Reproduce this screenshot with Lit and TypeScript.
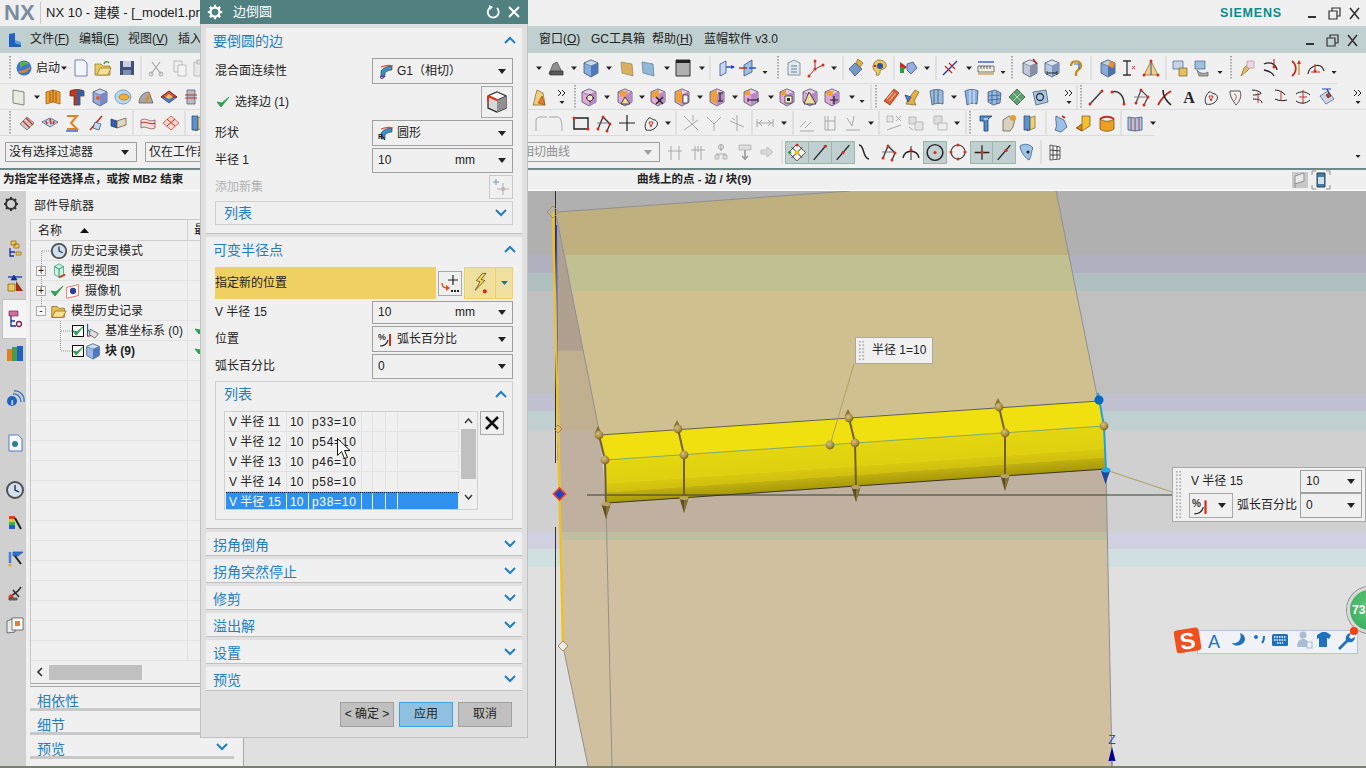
import { LitElement, html, css, svg } from "lit";
import { customElement } from "lit/decorators.js";

const st = (d: string, c = "#333", w = 1.1) => svg`<path d=${d} fill="none" stroke=${c} stroke-width=${w}/>`;
const pg = (d: string, f: string, s = "#456") => svg`<path d=${d} fill=${f} stroke=${s} stroke-width=".7"/>`;
const dots = (pts: number[][], c = "#d03020") => pts.map(([x, y]) => svg`<circle cx=${x} cy=${y} r="1.5" fill=${c}/>`);
const cube = (t: string, l: string, r: string) => svg`<path d="M10 2l7 3v10l-7 4-7-4V5z" fill=${l} stroke="#456" stroke-width=".8"/><path d="M3 5l7 3 7-3-7-3z" fill=${t} stroke="#456" stroke-width=".5"/><path d="M10 8v11l7-4V5z" fill=${r}/>`;
const pink = (extra: any) => svg`${cube("#f0c8e8", "#e4a8d8", "#b888c8")}${extra}`;
const gr = "#a8a8a8";

const ICONS: Record<string, any> = {
  arrow: svg`<path d="M7 8.5h6l-3 3.5z" fill="#222"/>`,
  sarrow: svg`<path d="M7.5 13h5l-2.5 3z" fill="#222"/>`,
  sep: svg`<path d="M10 -2v24" stroke="#d0d0d0"/>`,
  grip: svg`<path d="M10 -2v24" stroke="#909090" stroke-width="1.5" stroke-dasharray="1.5 1.5"/>`,
  more: svg`<path d="M6 3l3 3-3 3M10 3l3 3-3 3" fill="none" stroke="#222"/><path d="M7.5 14h5l-2.5 3z" fill="#222"/>`,
  start: svg`<circle cx="10" cy="10" r="7.5" fill="#3a78d0"/><path d="M3 13c5 4 12 2 14-6-2 4-9 6-14 6z" fill="#e88020"/><path d="M6 5c3-2 7-2 9 1-3 0-6 1-9 4z" fill="#60b040"/>`,
  page: svg`<path d="M4 2h9l3 3v13H4z" fill="#f4f6ff" stroke="#7080c0"/>`,
  open: svg`<path d="M2 6h6l2 2h7v9H2z" fill="#e8c860" stroke="#907020" stroke-width=".7"/><path d="M4 17l3-7h11l-3 7z" fill="#f4e090" stroke="#907020" stroke-width=".7"/><path d="M11 6c1-3 4-3 5-1" fill="none" stroke="#409040" stroke-width="1.4"/>`,
  save: svg`<path d="M3 3h14v14H3z" fill="#405080"/><path d="M6 3h8v6H6z" fill="#c8d0e0"/><path d="M6 12h8v5H6z" fill="#808ca8"/>`,
  scissors: svg`${st("M5 16l9-12M15 16L6 4", gr, 1.2)}<circle cx="5" cy="16" r="2" fill="none" stroke=${gr}/><circle cx="15" cy="16" r="2" fill="none" stroke=${gr}/>`,
  copy: svg`${pg("M4 3h8v11H4z", "#eee", gr)}${pg("M8 7h8v11H8z", "#f4f4f4", gr)}`,
  paste: svg`${pg("M4 4h12v14H4z", "#e8e8e8", gr)}${pg("M7 2h6v4H7z", "#ddd", gr)}`,
  sq: pg("M4 3l11 2v13L4 16z", "#e8ece0", "#506050"),
  bookO: svg`${pg("M3 5l7-2 7 2v12l-7-2-7 2z", "#f0a030", "#905010")}${st("M7 5v10M10 3v12M13 5v10", "#905010", 1)}`,
  tee: svg`${pg("M3 4c4-2 10-2 14 0v5h-4v9H7V9H3z", "#c03820", "#602010")}<path d="M10 3c2 0 5 0 7 1v5h-4v9h-3z" fill="#3060a0"/>`,
  cubeB: cube("#c8dcf4", "#88aee0", "#5078b8"),
  cubeBo: svg`${cube("#c8d4f0", "#98a8e0", "#7888c8")}<circle cx="8" cy="11" r="2" fill="#e06020"/>`,
  oval: svg`<path d="M10 3c5 0 8 4 8 7s-3 7-8 7-8-4-8-7 3-7 8-7z" fill="#b8d8f0" stroke="#5080b0" stroke-width=".7"/><ellipse cx="11" cy="10" rx="5" ry="3" fill="#f0b030" stroke="#a06010" stroke-width=".6"/>`,
  scan: svg`${pg("M3 16l4-10 4-2 4 8 2 4z", "#909090", "#444")}${pg("M4 13h13v4H4z", "#585858", "#333")}`,
  scanO: svg`${pg("M3 16c0-7 5-11 10-11l4 11z", "#a8a8a8", "#505050")}<path d="M9 14l4-8 2 1-4 8z" fill="#e09020"/>`,
  rb: svg`${pg("M10 4l8 6-8 6-8-6z", "#5078c0", "#304070")}${pg("M10 4l8 6H2z", "#d05040", "#802010")}<path d="M10 7l4 3-4 2-4-2z" fill="#f0c060"/>`,
  cyl: svg`${pg("M6 3h8v14H6z", "#b8b8c8", "#505060")}${st("M4 8h12M4 11h12", "#c03020", 1)}`,
  l3a: svg`${pg("M3 11l7-7 7 6-7 7z", "#c8c8c8", "#606060")}${st("M6 8l7 7M9 5l7 7", "#d03020", 1.3)}`,
  l3b: svg`${pg("M2 9l8-4 8 4-8 5z", "#c0d0e8", "#304870")}${st("M6 8l1 3M10 6l1 5M14 8l-1 3", "#d03020", 1.6)}`,
  l3c: svg`${st("M5 3h10L9 10l6 6H5", "#e08020", 2)}${st("M4 18h12", "#3060c0", 1.4)}`,
  l3d: svg`${st("M4 17L16 3", "#c03020", 1.6)}${pg("M9 9l6 2-2 6-6-2z", "#c0d8f0", "#304870")}`,
  l3e: svg`${pg("M2 6l6 2v7L2 13z", "#3060a8", "#203870")}${pg("M8 8l9-3v7l-9 3z", "#e0d8c0", "#605030")}`,
  l3f: svg`${pg("M3 7c5-3 9 3 14 0v8c-5 3-9-3-14 0z", "#f0e0e0", "#804040")}${st("M3 10c5-3 9 3 14 0", "#d03020", 1.2)}`,
  l3g: svg`${pg("M10 3l8 7-8 7-8-7z", "#f4d8d0", "#c03020")}${st("M6 6l8 7M14 6l-8 7", "#c03020", 1)}`,
  faceY: pg("M4 4l11 2 1 12-11-3z", "#d8b060", "#908060"),
  faceB: pg("M4 4l11 2 1 12-11-3z", "#90b8d8", "#607890"),
  box: svg`<path d="M3 2h14v16H3z" fill="#b0b0b0" stroke="#333" stroke-width="1"/><path d="M3 2h14v3H3z" fill="#222"/>`,
  planeA: svg`${pg("M4 6l6-3v12l-6 3z", "#c8d8f0", "#204080")}${st("M10 9h8", "#2040d0", 1.4)}<path d="M15 7l4 2-4 2z" fill="#2040d0"/>`,
  planeB: svg`${pg("M6 7l8-5v12l-8 4z", "#9cc0e0", "#204080")}${st("M1 10h8", "#c02020", 1.4)}${st("M11 10h7", "#2040d0", 1.4)}`,
  listCube: svg`${pg("M4 5l6-3 6 3v12H4z", "#e0e8f0", "#607080")}${st("M7 8h6M7 11h6M7 14h6", "#608090", 1.2)}`,
  axes: svg`${st("M10 3v8l-6 7M10 11l8-4", "#a03030", 1)}${dots([[10, 3], [18, 7], [4, 18], [10, 11]])}`,
  diamond: svg`${pg("M9 5l7 6-7 7-6-7z", "#7898c8", "#304070")}${pg("M12 1l5 4-3 4-4-4z", "#e0b040", "#806020")}`,
  palette: svg`<path d="M10 2c5 0 8 3 7 7-2 3-6 2-6 5s-2 4-4 3c2-4-3-3-3-8 0-4 3-7 6-7z" fill="#e8c860" stroke="#806020" stroke-width=".7"/><circle cx="11" cy="8" r="3" fill="#3050a0"/><circle cx="6" cy="8" r="1.3" fill="#c03020"/>`,
  triGreen: svg`<path d="M2 4l7 5-7 6z" fill="#c03020"/><path d="M2 9h4v6H2z" fill="#20a040"/>${pg("M9 6l6-2 4 6-6 6-4-4z", "#90b0e0", "#304880")}`,
  measLine: svg`${st("M3 17L17 3", "#3040a0", 1.4)}${st("M5 8l7 7M9 5l6 6", "#c02020", 1.1)}`,
  ruler: svg`${pg("M2 8h16v6H2z", "#f0f0e0", "#404040")}${st("M5 8v3M8 8v3M11 8v3M14 8v3", "#333", .8)}${st("M2 4h16", "#2040c0", 1.2)}${st("M2 16h16", "#d09020", 1.2)}`,
  cubePen: svg`${cube("#e0e4ec", "#c0c8d8", "#8890a8")}${st("M13 1l4 5", "#c02020", 1.5)}`,
  cubeDim: svg`${cube("#dde4f0", "#b8c8e0", "#8098c0")}${st("M5 15h10", "#222", 1)}${st("M5 13v4M15 13v4", "#222", .8)}`,
  keyY: svg`<path d="M5 8c0-6 9-6 10-1 1 4-5 5-5 8v3" fill="none" stroke="#c09020" stroke-width="2.4"/><path d="M8 6l5 0v5" fill="none" stroke="#3070b0" stroke-width="1.2"/>`,
  boxOrange: svg`${cube("#c0d0e8", "#88a8d8", "#5070a8")}<path d="M12 3l5 2-2 5-5-2z" fill="#e89030"/>`,
  dimX: svg`${st("M6 3h8M10 3v14M6 17h8", "#333", 1.3)}${st("M15 8l3 3M18 8l-3 3", "#d03030", .9)}`,
  conePts: svg`${pg("M10 3l7 14H3z", "#f0d090", "#806020")}${st("M10 3v14", "#305090", 1)}${dots([[10, 3], [3, 17], [17, 17]])}`,
  lockA: svg`${pg("M3 3h10v8H3z", "#c8d4e8", "#406090")}${pg("M9 10h8v8H9z", "#e0c060", "#806020")}`,
  lockB: svg`${pg("M3 3h10v8H3z", "#9cc0dc", "#406090")}${pg("M5 12c3 4 8 4 11 2v4H7z", "#a8a8a8", "#606060")}`,
  penY: svg`${pg("M4 18l3-8 8-7 2 2-7 8z", "#e8c060", "#806020")}${pg("M10 3h7v7h-7z", "#f0d8e8", "#b090a0")}`,
  curveCut: svg`${st("M3 6c6-3 12 0 13 6", "#222", 1.3)}${st("M3 12c5 1 9 3 10 6", "#222", 1.3)}${st("M13 1v8", "#c02020", 1.1)}${dots([[13, 9]])}`,
  curveRed: svg`${st("M7 18c5-4 5-11 0-15", "#c03020", 1.8)}${st("M14 3v14", "#d08020", 1.2)}<path d="M12 6l2-4 2 4z" fill="#d03020"/>`,
  arcRed: svg`${st("M2 16c1-8 13-13 16-3", "#333", 1.2)}${st("M9 6v7M5 14h9", "#c03020", 1)}${dots([[9, 13]])}`,
  faceYO: svg`${pg("M5 18c2-5 2-9 4-15l6 3 2 12z", "#f0d080", "#806020")}${pg("M10 16l4-7 3 9z", "#e08030", "#a05010")}`,
  p1: pink(svg`${st("M7 11h8M11 7v8", "#222", 1.3)}<circle cx="11" cy="11" r="3" fill="#f0f0d0" stroke="#222" stroke-width=".7"/>`),
  p2: pink(svg`<path d="M5 4h8l-3 7-5-2z" fill="#f0a030"/><path d="M10 10l5 7H6z" fill="#f0e0a0" stroke="#222" stroke-width=".8"/>`),
  p3: pink(svg`<path d="M4 5l7-2v7H4z" fill="#f0a030"/>${st("M8 10l7 7M15 10l-7 7", "#222", 1.4)}`),
  p4: pink(svg`<path d="M4 5l6-2v14l-6-3z" fill="#f0a030"/>${pg("M11 8h5v8h-5z", "#f4f4f4", "#222")}`),
  p5: pink(svg`<path d="M4 5l6-2v14l-6-3z" fill="#f0a030"/>${st("M11 6h5M11 14h5M13 6v8", "#222", 1.1)}`),
  p6: pink(svg`<path d="M4 5l5-2v5H4z" fill="#f0a030"/>${st("M7 13h10", "#222", 1.1)}${st("M7 11v4M17 11v4", "#222", 1)}`),
  p7: pink(svg`<path d="M4 5l5-2v5H4z" fill="#f0a030"/>${pg("M8 9h7v7H8z", "#f4f0d0", "#222")}<path d="M10 11h3v3h-3z" fill="#222"/>`),
  p8: pink(svg`<path d="M9 5l7 12H4z" fill="#f0e0a0" stroke="#222" stroke-width=".8"/>`),
  p9: pink(svg`<path d="M5 4h7l-3 5-4-1z" fill="#f0a030"/>${st("M8 13h8M12 9v8", "#222", 1.2)}`),
  barR: svg`${pg("M3 14L13 2l5 4-9 12z", "#e06030", "#803010")}${st("M6 12l6-7M8 14l7-8", "#fff", .8)}`,
  spark: svg`${pg("M4 17l3-6 6-8 4 2-5 9 2 4z", "#e8b040", "#806020")}${pg("M3 8l6 2-3 5z", "#5080d0", "#203070")}`,
  surf: svg`<path d="M4 4c4-2 10-2 13 0v13c-3-1-8-1-11 1z" fill="#9cbcdc" stroke="#304870" stroke-width=".7"/>${st("M8 3v14M12 3v14", "#304870", .7)}`,
  surf2: svg`<path d="M4 4c4-2 10-2 13 0l-1 13c-3-1-7-1-10 1z" fill="#88b0dc" stroke="#304870" stroke-width=".7"/>${st("M9 3v14M13 3v14", "#fff", .8)}`,
  gridB: svg`${pg("M4 5l7-2 6 3-1 10-7 2-5-3z", "#90b8e0", "#304870")}${st("M8 4v13M13 4v13M4 9l13-1M4 13l13-1", "#304870", .6)}`,
  gridG: svg`${pg("M10 2l8 8-8 8-8-8z", "#60a070", "#205030")}${st("M6 6l8 8M14 6l-8 8", "#d0e8d0", .8)}`,
  gridO: svg`${pg("M3 5l13-2 2 12-12 3z", "#a8c8e8", "#304870")}<circle cx="10" cy="10" r="3.5" fill="none" stroke="#333" stroke-width="1.3"/>`,
  line: svg`${st("M4 17L16 4", "#333", 1.3)}${dots([[4, 17], [16, 4]])}`,
  arcPts: svg`${st("M3 5c7-2 12 4 12 12", "#333", 1.5)}${dots([[3, 5], [15, 17]])}`,
  poly: svg`${st("M4 16L9 3l7 7-4 8", "#444", 1.2)}${st("M2 10h14", "#777", .9)}${dots([[9, 3], [4, 16], [16, 10], [12, 18]])}`,
  xcurve: svg`${st("M3 18c3-6 6-10 13-14", "#c02820", 1.8)}${st("M8 3c0 6 2 10 8 15", "#222", 1.6)}`,
  A: svg`<text x="10" y="16" text-anchor="middle" font-family="Liberation Serif" font-weight="700" font-size="16" fill="#222">A</text>`,
  poc: svg`${st("M5 17c-2-5 0-9 3-12 2-1 3 2 6 2 3 1 3 5 1 7-2 3-7 4-10 3z", "#333", 1)}${st("M8 9h4l-2 5z", "#c03020", 1)}`,
  poc2: svg`${st("M5 4h10c2 5 0 10-4 14C8 14 5 10 5 4z", "#555", 1)}${st("M9 7c3 0 3 5 0 7", "#c06050", 1)}`,
  dash1: svg`${st("M4 3c5 0 8 2 9 3s-4 2-8 2M5 12c5 0 9 1 9 4", "#222", 1)}${st("M10 6v10", "#c03030", 1)}`,
  dash2: svg`${st("M4 3c4 0 8 2 10 5M4 12c4 2 8 2 12 1", "#222", 1)}${st("M10 4v10", "#c03030", 1)}`,
  dash3: svg`${st("M3 7c4-3 10-3 14 1M3 14c4 3 10 3 14-1", "#222", 1)}${st("M10 3v14M6 10h8", "#c03030", 1)}`,
  cardR: svg`${pg("M3 9l8-5 6 8-8 5z", "#d0d8e8", "#405880")}${pg("M9 8l3-2 2 3-3 2z", "#c04030", "#602010")}${st("M5 2h9M10 2l2 4", "#2040c0", 1.2)}`,
  garc: st("M6 18V8c0-3 2-4 5-4h6", gr, 1),
  garc2: st("M3 4h8c4 0 5 4 5 14", gr, 1),
  rect: svg`<path d="M3 5h14v11H3z" fill="none" stroke="#222" stroke-width="1.4"/>${dots([[3, 5], [17, 16]])}`,
  polyR: svg`${st("M4 16L9 4l7 7-3 7", "#333", 1.3)}${st("M3 10h12", "#666", .9)}${dots([[9, 4], [4, 16], [16, 11], [13, 18]])}`,
  cross: st("M10 2v16M2 10h16", "#222", 1.2),
  gtrim: st("M3 3l14 14M3 17L17 7M12 2v6", gr, 1),
  gtrim2: st("M3 4l7 7 7-7M10 11v7", gr, 1),
  gtrim3: st("M10 2v16M3 8l14 6M5 5l3 2", gr, 1),
  gdim: st("M2 10h16M2 6v8M18 6v8M7 7l-3 3 3 3M13 7l3 3-3 3", gr, 1),
  gslash: st("M3 14l6-6M8 15l6-6M3 18h14", gr, 1),
  gframe: st("M5 3v14h10V3M5 8h10M8 3v14", gr, 1),
  gang: st("M3 17h14M4 5l5 8M11 3l-2 10", gr, 1),
  gmix: svg`${pg("M3 3h6v6H3z", "#e8e8e8", gr)}${st("M12 3l5 5M17 3l-5 5M3 17l14-5", gr, 1)}`,
  gmix2: svg`${pg("M3 4h7v7H3z", "#ddd", gr)}${pg("M9 9h8v8H9z", "#e4e4e4", gr)}${st("M3 14l4 3", gr, 1)}`,
  gmix3: svg`${pg("M4 3h8v8H4z", "#ddd", gr)}${pg("M8 10h9v7H8z", "#eee", gr)}`,
  fBlue: svg`${pg("M4 3h12l-4 3v12H8V8H4z", "#5090d0", "#102850")}${st("M8 6h4", "#fff", 1)}`,
  fHand: svg`${pg("M4 18V7l6-4 6 3-2 8-3 4z", "#d8d0c0", "#505040")}<circle cx="14" cy="5" r="3" fill="#e0a030"/>`,
  fCyl: svg`${pg("M6 6l8-3v12l-8 3z", "#f0d070", "#806020")}${pg("M3 3h6v14H3z", "#6090c8", "#204070")}`,
  fSheet: svg`${pg("M5 17c3-5 0-8 1-14l8 4 3 7-6 5z", "#9cc0e8", "#304870")}${st("M12 3l3 2", "#c03020", 2)}`,
  fOrange: svg`${pg("M8 3h8v10l-8 5-6-3 6-4z", "#f0c030", "#805010")}${pg("M3 15l5-4v7z", "#e08020", "#805010")}`,
  fRed: svg`${pg("M3 6c4 3 10 3 14 0v10c-4 3-10 3-14 0z", "#f0a020", "#604010")}${st("M3 6c4-3 10-3 14 0", "#c03020", 1.8)}`,
  fBook: svg`${pg("M3 4l7 1 7-1v13l-7 1-7-1z", "#a8c8e8", "#204878")}${st("M10 5v13M6 5v12M14 5v12", "#c03020", .9)}`,
  gtick: st("M6 4v14M14 4v14M3 9h14", gr, 1),
  gtick2: st("M7 4v14M13 4v14M3 8h14M10 4v6", gr, 1),
  gchain: svg`${st("M10 3v6M6 17v-5h8v5", gr, 1.2)}<circle cx="10" cy="5" r="2.5" fill="none" stroke=${gr}/>${pg("M4 13h4v4H4zM12 13h4v4h-4z", "#ddd", gr)}`,
  gkey: svg`${pg("M4 3h12v5H4z", "#ddd", gr)}${st("M10 8v10M7 14l3 3 3-3", "#999", 1.6)}`,
  garrow: svg`<path d="M4 8h6V5l6 5-6 5v-3H4z" fill="#d8d8d8" stroke="#c0c0c0"/>`,
  snapAll: svg`${pg("M10 2l8 8-8 8-8-8z", "#f8f8f0", "#222")}${st("M5 5l10 10M15 5L5 15", "#222", .9)}<circle cx="10" cy="10" r="2" fill="#f0c000"/><circle cx="3" cy="10" r="1.4" fill="#20a020"/><circle cx="10" cy="3" r="1.4" fill="#d03020"/>`,
  snapEnd: svg`${st("M4 17L16 3", "#222", 1.3)}${dots([[15, 4]])}`,
  snapMid: svg`${st("M4 17L16 3", "#222", 1.3)}${dots([[10, 10]])}`,
  curveS: st("M5 3c6 0 3 13 10 14", "#222", 1.5),
  arcT: svg`${st("M2 16c2-9 14-9 16 0", "#222", 1.3)}${st("M10 4v14", "#333", 1)}${dots([[10, 8]])}`,
  circC: svg`<circle cx="10" cy="10" r="7.5" fill="none" stroke="#222" stroke-width="1.4"/>${dots([[10, 10]])}`,
  circQ: svg`<circle cx="10" cy="10" r="7" fill="none" stroke="#444" stroke-width="1.2"/>${dots([[10, 3], [17, 10], [10, 17], [3, 10]])}`,
  plus: svg`${st("M10 3v14M3 10h14", "#222", 1.2)}${dots([[10, 10]])}`,
  onLine: svg`${st("M4 17L16 3", "#222", 1.3)}${dots([[12, 8]])}`,
  faceP: svg`${pg("M4 4c4-3 10-2 13 2-2 3-1 8-4 12-3-2-8-6-9-14z", "#9cc4e8", "#304870")}${dots([[12, 10]], "#222")}`,
  gridL: svg`${pg("M5 3l10 2v12L5 18z", "#f4f4f4", "#222")}${st("M8 4v13M12 4v13M5 8l10 1M5 13l10 0", "#222", .8)}`,
  gear: svg`<circle cx="10" cy="10" r="5" fill="none" stroke="#333" stroke-width="2"/><path d="M10 3v2.500M10 14.500v2.500M3 10h2.500M14.500 10h2.500M5 5l2 2M13 13l2 2M15 5l-2 2M7 13l-2 2" stroke="#333" stroke-width="2"/>`,
  rAsm: svg`${pg("M6 3h5v4H6zM9 6h5v4H9z", "#f0c850", "#906010")}${st("M5 10v8h4M5 14h5", "#1030a0", 1.3)}${pg("M11 14h5v3h-5z", "#f0c850", "#906010")}`,
  rCon: svg`${st("M3 4l14 0", "#1030a0", 1.2)}${pg("M9 2l-3 5h6z", "#1030a0", "#1030a0")}${pg("M3 11h7v7H3z", "#f0c850", "#806010")}<path d="M11 8l7 10h-7z" fill="#a03010"/>`,
  rHist: svg`${pg("M4 3h9v5H4z", "#d070a0", "#802050")}${st("M6 8v10h5M6 13h4", "#1030a0", 1.3)}<circle cx="14" cy="16" r="2.500" fill="none" stroke="#802050" stroke-width="1.300"/>`,
  rBooks: svg`<path d="M2 6h5v12H2z" fill="#e08020"/><path d="M7 4h5v14H7z" fill="#40a050"/><path d="M12 3h6v15h-6z" fill="#2060c0"/>`,
  rInfo: svg`<circle cx="7" cy="12" r="5" fill="#2060c0"/><text x="7" y="15.500" text-anchor="middle" font-size="8" font-weight="700" fill="#fff">i</text>${st("M8 5c4-1 8 3 8 8M9 2c5-1 11 4 10 11", "#3070d0", 1.300)}`,
  rDoc: svg`${pg("M4 2h9l4 4v12H4z", "#f4f8ff", "#2050c0")}<circle cx="10" cy="11" r="3" fill="#308090"/>`,
  rClock: svg`<circle cx="10" cy="10" r="8" fill="#d0e0f0" stroke="#505050" stroke-width="2"/>${st("M10 5v5l4 2", "#222", 1.300)}`,
  rColor: svg`<path d="M4 3h6v3H4z" fill="#e04020"/><path d="M4 6h6v3H4z" fill="#f0c020"/><path d="M4 9h6v3H4z" fill="#40b040"/><path d="M4 12h6v4H4z" fill="#2060c0"/>${st("M10 5l6 11", "#222", 2)}`,
  rFilt: svg`${pg("M8 4h10l-5 4H8z", "#3070d0", "#2050a0")}${st("M5 4v11", "#4080e0", 2.500)}${st("M10 8l6 8", "#222", 2)}<circle cx="5" cy="17" r="1.500" fill="#e0a020"/>`,
  rRobot: svg`${st("M5 15l8-6 3-4M8 8l6 7", "#333", 1.600)}<circle cx="6" cy="15" r="2.500" fill="#e04020"/>${pg("M4 16h8v2H4z", "#777", "#333")}`,
  rWin: svg`${pg("M2 6l8-3v14l-8 1z", "#e8e8e8", "#444")}${pg("M7 3h11v12H7z", "#fff", "#444")}<path d="M10 6h5v5h-5z" fill="#e08040"/>`,
};

const icon = (name: string) => {
  const on = name.endsWith("*");
  const n = on ? name.slice(0, -1) : name;
  return html`<svg class=${on ? "ico on" : "ico"} viewBox="0 0 20 20">${ICONS[n]}</svg>`;
};

type Item = [number, string];

const ROW1: Item[] = [[5, "grip"], [19, "start"], [41, "text:启动"], [59, "arrow"], [76, "page"], [98, "open"], [122, "save"], [136, "sep"], [151, "scissors"], [175, "copy"], [195, "paste"], [534, "arrow"], [551, "scan"], [569, "arrow"], [586, "cubeB"], [604, "arrow"], [622, "faceY"], [643, "faceB"], [662, "arrow"], [678, "box"], [697, "arrow"], [705, "sep"], [721, "planeA"], [743, "planeB"], [760, "sarrow"], [773, "grip"], [789, "listCube"], [810, "axes"], [829, "arrow"], [838, "sep"], [851, "diamond"], [874, "palette"], [889, "sep"], [903, "triGreen"], [922, "arrow"], [931, "sep"], [945, "measLine"], [964, "arrow"], [981, "ruler"], [998, "sarrow"], [1007, "grip"], [1025, "cubePen"], [1047, "cubeDim"], [1071, "keyY"], [1086, "sep"], [1103, "boxOrange"], [1122, "dimX"], [1146, "conePts"], [1161, "sep"], [1175, "lockA"], [1197, "lockB"], [1215, "sarrow"], [1226, "grip"], [1242, "penY"], [1266, "curveCut"], [1290, "curveRed"], [1311, "arcRed"], [1329, "sarrow"]];
const ROW2: Item[] = [[19, "sq"], [37, "arrow"], [53, "bookO"], [77, "tee"], [100, "cubeBo"], [123, "oval"], [146, "scanO"], [169, "rb"], [191, "cyl"], [538, "faceYO"], [562, "more"], [575, "grip"], [589, "p1"], [607, "arrow"], [625, "p2"], [642, "arrow"], [658, "p3"], [682, "p4"], [700, "arrow"], [717, "p5"], [735, "arrow"], [751, "p6"], [771, "arrow"], [787, "p7"], [810, "p8"], [832, "p9"], [852, "arrow"], [862, "sarrow"], [871, "sep"], [876, "grip"], [891, "barR"], [912, "spark"], [936, "surf"], [954, "arrow"], [971, "surf2"], [994, "gridB"], [1017, "gridG"], [1040, "gridO"], [1069, "more"], [1077, "sep"], [1081, "grip"], [1096, "line"], [1119, "arcPts"], [1142, "poly"], [1165, "xcurve"], [1189, "A"], [1211, "poc"], [1235, "poc2"], [1258, "dash1"], [1281, "dash2"], [1303, "dash3"], [1327, "cardR"], [1358, "more"]];
const ROW3: Item[] = [[5, "grip"], [22, "l3a"], [45, "l3b"], [67, "l3c"], [91, "l3d"], [114, "l3e"], [128, "sep"], [143, "l3f"], [166, "l3g"], [180, "sep"], [194, "fCyl"], [535, "garc"], [551, "garc2"], [576, "rect"], [599, "polyR"], [622, "cross"], [646, "poc"], [663, "arrow"], [671, "sep"], [686, "gtrim"], [709, "gtrim2"], [732, "gtrim3"], [747, "sep"], [760, "gdim"], [779, "arrow"], [788, "sep"], [802, "gslash"], [825, "gframe"], [848, "gang"], [866, "arrow"], [874, "sep"], [889, "gmix"], [911, "gmix2"], [935, "gmix3"], [952, "arrow"], [961, "sep"], [965, "grip"], [981, "fBlue"], [1004, "fHand"], [1026, "fCyl"], [1041, "sep"], [1055, "fSheet"], [1079, "fOrange"], [1102, "fRed"], [1116, "sep"], [1130, "fBook"], [1148, "arrow"]];
const ROW4: Item[] = [[15, "sel:没有选择过滤器:132"], [155, "sel:仅在工作部:170"], [525, "dsel:相切曲线:145"], [675, "gtick"], [698, "gtick2"], [721, "gchain"], [745, "gkey"], [767, "garrow"], [782, "sep"], [797, "snapAll*"], [820, "snapEnd*"], [843, "snapMid*"], [864, "curveS"], [889, "polyR"], [911, "arcT"], [935, "circC*"], [958, "circQ"], [982, "plus*"], [1004, "onLine*"], [1026, "faceP"], [1041, "sep"], [1055, "gridL"], [1358, "sarrow"]];
const MENU: [number, string, string][] = [[30, "文件", "F"], [79, "编辑", "E"], [128, "视图", "V"], [178, "插入", ""], [539, "窗口", "O"], [591, "GC工具箱", ""], [652, "帮助", "H"], [704, "蓝帽软件 v3.0", ""]];
const RAIL: [number, string][] = [[204, "gear"], [248, "rAsm"], [283, "rCon"], [318, "rHist"], [353, "rBooks"], [399, "rInfo"], [443, "rDoc"], [490, "rClock"], [523, "rColor"], [558, "rFilt"], [592, "rRobot"], [625, "rWin"]];

const tri = html`<svg class="tri" viewBox="0 0 8 5"><path d="M0 0h8L4 5z" fill="#222"/></svg>`;
const chevUp = html`<svg class="chev" viewBox="0 0 12 8"><path d="M1 7l5-5 5 5" fill="none" stroke="#2080c0" stroke-width="2"/></svg>`;
const chevDown = html`<svg class="chev" viewBox="0 0 12 8"><path d="M1 1l5 5 5-5" fill="none" stroke="#2080c0" stroke-width="2"/></svg>`;
const winCtl = html`<div class="winctl"><svg viewBox="0 0 60 14" width="60" height="14"><path d="M2 11h8" stroke="#333" stroke-width="2"/><path d="M23 5h8v8h-8z" fill="none" stroke="#333" stroke-width="1.200"/><path d="M26 5V2h8v8h-3" fill="none" stroke="#333" stroke-width="1.200"/><path d="M44 2l9 11M53 2l-9 11" stroke="#333" stroke-width="1.600"/></svg></div>`;
const grip = html`<span class="gripdots"></span>`;

const arcIcon = (c: string, mark: any) => svg`<path d="M3 14V8c2-3 6-5 11-5v4c-3 0-5 1-7 3v4z" fill=${c} stroke="#222" stroke-width=".5"/>${st("M3 4c5-2 9-2 12-1", "#e05020", 1.200)}${mark}`;
const pctIcon = svg`<text x="0" y="9" font-size="9" font-weight="700" fill="#333">%</text>${st("M2 15c4 0 7-2 8-6", "#222", 1.100)}${st("M12 3v12", "#d03020", 2)}`;
const dIcon = (c: any, w = 16, h = 16) => html`<svg class="dico" width=${w} height=${h} viewBox="0 0 16 16">${c}</svg>`;

const select = (lead: any, label: string, unit = "") => html`<div class="sel">${lead}<span class="sel-t">${label}</span>${unit ? html`<span class="unit">${unit}</span>` : ""}${tri}</div>`;

const VROWS = [["V 半径 11", "10", "p33=10"], ["V 半径 12", "10", "p54=10"], ["V 半径 13", "10", "p46=10"], ["V 半径 14", "10", "p58=10"], ["V 半径 15", "10", "p38=10"]];
const TREE: { depth: number; box?: string; check?: boolean; cb?: boolean; ico: any; label: string; bold?: boolean; mark?: boolean }[] = [
  { depth: 0, ico: ICONS.rClock, label: "历史记录模式" },
  { depth: 0, box: "+", ico: svg`${pg("M5 5l5-3 5 3v9l-5 3-5-3z", "#d0f0e0", "#109060")}${st("M5 5l5 3 5-3M10 8v9", "#109060", 1)}${st("M10 17l7-3", "#d04020", 2)}`, label: "模型视图" },
  { depth: 0, box: "+", check: true, ico: svg`${pg("M3 6l13-3v12L3 18z", "#fff", "#d03010")}<circle cx="10" cy="10" r="3.500" fill="#304090"/>`, label: "摄像机" },
  { depth: 0, box: "-", ico: svg`${pg("M2 5h6l2 2h6v10H2z", "#e8c050", "#705010")}${pg("M2 17l4-7h12l-4 7z", "#f8e090", "#705010")}`, label: "模型历史记录" },
  { depth: 1, cb: true, ico: svg`${st("M4 2v14", "#2040c0", 1.200)}${st("M4 16l10-3", "#d03020", 1.200)}${st("M4 8l6 8", "#20a040", 1.200)}${pg("M7 8l9 5-4 5-6-4z", "#e0e0e0", "#333")}`, label: "基准坐标系 (0)", mark: true },
  { depth: 1, cb: true, ico: cube("#c8dcf4", "#9ab8e8", "#5078c0"), label: "块 (9)", bold: true, mark: true },
];
const checkMark = html`<svg class="dico" width="14" height="14" viewBox="0 0 14 14"><path d="M1 7l4 5 8-10-7 6z" fill="#30a050" stroke="#30a050"/></svg>`;

const BANDS = [[191, 64, "#b0b0b0"], [255, 18, "#b0b0c0"], [273, 18, "#b0c0c0"], [291, 103, "#c0c0c0"], [394, 17, "#c0c0d0"], [411, 19, "#c0d0d0"], [430, 102, "#d0d0d0"], [532, 17, "#d0d0e0"], [549, 18, "#d0e0e0"], [567, 199, "#e0e0e0"]] as [number, number, string][];
const TOPB = [[191, 64, "#c0b080"], [255, 36, "#c0c090"], [291, 144, "#d0c090"]] as [number, number, string][];
const SIDEB = [[191, 160, "#b0a090"], [351, 79, "#c0b090"], [430, 102, "#c0b0a0"], [532, 8, "#c0c0a0"], [540, 226, "#d0c0a0"]] as [number, number, string][];

const sphere = (x: number, y: number) => svg`<circle cx=${x} cy=${y} r="4.400" fill="url(#ball)"/>`;
const coneDown = (x: number, y: number, y2: number) => svg`<path d="M${x - 4.500} ${y}L${x} ${y2}L${x + 4.500} ${y}z" fill="#5e5024"/><path d="M${x} ${y}L${x} ${y2}L${x + 4.500} ${y}z" fill="#857238"/><ellipse cx=${x} cy=${y} rx="4.500" ry="2" fill="#b8a460"/>`;
const coneUp = (x: number, y: number) => svg`<path d="M${x - 3.500} ${y + 7}L${x} ${y}L${x + 3.500} ${y + 7}z" fill="#857238"/>`;

const HANDLES: [number, number, number, number, number, number][] = [
  [599, 435, 605, 460, 606, 504],
  [678, 429, 684, 455, 684, 498],
  [849, 418, 855, 443, 856, 487],
  [999, 407, 1005, 433, 1005, 476],
];

@customElement("app-root")
export class AppRoot extends LitElement {
  static styles = css`
    :host { display: block; width: 1366px; height: 768px; position: relative; overflow: hidden; background: #f0f0f0; color: #222;
      font: 12px/1.2 "Liberation Sans", "Noto Sans CJK SC", sans-serif; }
    * { box-sizing: border-box; }
    .title { height: 26px; display: flex; align-items: center; background: #f0f0f0; }
    .logo { width: 41px; padding-left: 4px; font-size: 22px; font-weight: 700; color: #7b8ba0; line-height: 26px; border-right: 1px solid #c8c8c8; height: 22px; display: flex; align-items: center; flex: none; }
    .doc { margin-left: 5px; font-size: 13px; width: 1174px; white-space: nowrap; flex: none; }
    .siemens { font-weight: 700; font-size: 12.500px; letter-spacing: .8px; color: #0a8c8c; width: 83px; flex: none; }
    .winctl { flex: none; display: flex; margin-left: 3px; }
    .menu { height: 27px; background: #c0d0d0; display: flex; align-items: center; }
    .mbadge { width: 16px; height: 16px; margin-left: 7px; margin-right: 7px; flex: none; }
    .mi { flex: none; white-space: nowrap; }
    .mi u { text-decoration: underline; }
    .menu .winctl { margin-left: auto; margin-right: 2px; }
    .tbar { height: 26px; background: #f0f0f0; }
    .tbar.r1 { height: 31px; }
    .tbar.r4 { height: 32px; }
    .bar { height: 100%; display: flex; align-items: center; border-bottom: 1px solid #dcdcdc; }
    .r4 .bar { border-bottom: 0; }
    .cell { flex: none; display: flex; align-items: center; height: 20px; min-width: 0; }
    .ico { width: 20px; height: 20px; flex: none; overflow: visible; }
    .ico.on { background: #c0d0d0; outline: 1px solid #98b8a8; width: 22px; height: 21px; margin-left: -1px; }
    .ttext { font-size: 12px; white-space: nowrap; }
    .tsel { height: 20px; flex: none; border: 1px solid #a0a0a0; padding: 0 7px 0 3px; display: flex; align-items: center; justify-content: space-between; white-space: nowrap; overflow: hidden; }
    .tsel.dis { color: #909090; padding-left: 6px; }
    .tsel.dis .tri path { fill: #a0a0a0; }
    .tri { width: 8px; height: 5px; flex: none; }
    .cue { height: 23px; border-top: 2px solid #708888; border-bottom: 1px solid #fff; background: #f0f0f0; display: flex; align-items: center; padding-left: 3px; font-weight: 700; font-size: 11.500px; white-space: nowrap; }
    .cue-l { width: 634px; flex: none; }
    .cue-m { width: 653px; flex: none; }
    .cue-ico { width: 20px; height: 20px; flex: none; margin-right: 1px; }
    .main { height: 575px; display: flex; }
    .rail { width: 26px; flex: none; background: #d0d0d0; padding-top: 3px; display: flex; flex-direction: column; }
    .rc { flex: none; padding-left: 5px; position: relative; }
    .rc.g { padding-left: 1px; }
    .rc.act::before { content: ""; position: absolute; left: 2px; right: 0; top: -9px; height: 38px; background: #f4f4f4; border: 1px solid #c0c0c0; border-right: 0; }
    .rc .ico { position: relative; }
    .nav { width: 218px; flex: none; background: #f0f0f0; display: flex; flex-direction: column; border-right: 1px solid #a8a8a8; }
    .nav-h { height: 28px; padding: 2px 0 0 8px; display: flex; align-items: center; }
    .frame { height: 468px; margin-left: 4px; border: 1px solid #c8c8c8; border-bottom: 4px double #a8a8a8; border-right: 0; position: relative; overflow: hidden; }
    .thead { height: 21px; display: flex; align-items: center; border-bottom: 1px solid #d0d0d0; }
    .tcol { width: 157px; height: 100%; border-right: 1px solid #d0d0d0; padding-left: 7px; display: flex; align-items: center; flex: none; }
    .thead .tcol svg { margin-left: 18px; }
    .thead span { padding-top: 2px; }
    .tname { padding-left: 6px; }
    .trow { height: 20px; display: flex; align-items: center; border-bottom: 1px solid #e2e2e2; }
    .trow .tcol { border-right-color: #e2e2e2; padding-left: 0; }
    .node { display: flex; align-items: center; padding-left: 5px; white-space: nowrap; }
    .node.d1 { padding-left: 41px; }
    .node .ico { width: 18px; height: 18px; }
    .node span.t { margin-left: 3px; padding-top: 2px; }
    .bold { font-weight: 700; }
    .bx { width: 10px; height: 10px; border: 1px solid #aaa; background: #f8f8f8; flex: none; display: flex; align-items: center; justify-content: center; font-size: 10px; line-height: 8px; color: #222; margin-right: 4px; }
    .nobx { width: 14px; flex: none; }
    .cb { width: 12px; height: 12px; border: 1px solid #111; flex: none; display: flex; align-items: center; justify-content: center; background: #fff; }
    .cb svg { width: 12px; height: 12px; }
    .tlines { position: absolute; left: -31px; top: -220px; width: 244px; height: 768px; pointer-events: none; }
    .tsb { position: absolute; left: 0; right: 0; bottom: 0; height: 22px; background: #f0f0f0; display: flex; align-items: center; padding-left: 6px; }
    .thumb { width: 93px; height: 15px; background: #c0c0c0; margin-left: 6px; }
    .nsec { height: 24px; margin-left: 4px; margin-right: 9px; border-bottom: 3px solid #c8c8c8; color: #2080c0; font-size: 14px; display: flex; align-items: center; justify-content: space-between; padding: 0 6px 0 7px; flex: none; }
    .nsec span { padding-top: 7px; }
    .nsec .chev { margin-top: 3px; }
    .chev { width: 12px; height: 8px; flex: none; }
    .canvas { flex: 1; min-width: 0; }
    .scene { display: block; width: 1122px; height: 575px; }
    .strip { height: 2px; background: #788070; }

    .dialog { position: absolute; left: 200px; top: 0; width: 328px; height: 738px; background: #e0e0e0; border: 1px solid #c0c0c0; border-top: 0; display: flex; flex-direction: column; }
    .dhead { height: 24px; background: #508080; color: #fff; margin: 0 -1px; display: flex; align-items: center; padding: 0 6px; font-size: 13px; flex: none; }
    .dhead .gg { margin: 0 9px 0 0; }
    .dhead .sp { flex: 1; }
    .dbody { padding: 4px 5px 0; display: flex; flex-direction: column; flex: 1; }
    .sec { background: #f0f0f0; border-bottom: 1px solid #c0c0c0; margin-bottom: 3px; flex: none; }
    .shead { height: 23px; display: flex; align-items: center; justify-content: space-between; padding: 0 6px 0 7px; color: #2080c0; font-size: 14px; }
    .shead span { padding-top: 4px; }
    .sbody { display: flex; flex-direction: column; gap: 2px; padding: 7px 9px 8px; }
    .frow { display: flex; align-items: center; justify-content: space-between; flex: none; }
    .h26 { height: 26px; } .h25 { height: 25px; } .h24 { height: 24px; } .h23 { height: 23px; } .h32 { height: 32px; }
    .sel { width: 141px; height: 100%; flex: none; border: 1px solid #a0a0a0; display: flex; align-items: center; padding: 0 6px 0 5px; background: #f0f0f0; }
    .sel-t { margin-left: 3px; white-space: nowrap; }
    .sel-t:first-child { margin-left: 0; }
    .sel .tri { margin-left: auto; }
    .unit { margin-left: auto; }
    .unit + .tri { margin-left: 23px; }
    .dico { flex: none; }
    .lchk { display: flex; align-items: center; gap: 5px; padding-left: 1px; }
    .ibtn { border: 1px solid #a8a8a8; display: flex; align-items: center; justify-content: center; flex: none; background: #f0f0f0; }
    .ib32 { width: 32px; height: 32px; }
    .ib24 { width: 24px; height: 24px; }
    .ibd { border-color: #c8c8c8; }
    .dim { color: #b0b0b0; }
    .sub { height: 24px; border: 1px solid #d0d0d0; display: flex; align-items: center; justify-content: space-between; padding: 0 5px 0 8px; color: #2080c0; font-size: 14px; flex: none; }
    .yrow { display: flex; gap: 2px; align-items: center; height: 32px; flex: none; }
    .ybar { width: 221px; height: 32px; background: #f0d060; display: flex; align-items: center; flex: none; }
    .yb1 { width: 24px; height: 25px; }
    .yb2 { width: 49px; height: 32px; background: #f0e0a0; border: 1px solid #f0d060; display: flex; align-items: center; flex: none; }
    .yb2 .a { width: 31px; height: 100%; display: flex; align-items: center; justify-content: center; border-right: 1px solid #f0d060; flex: none; }
    .yb2 .b { flex: 1; display: flex; align-items: center; justify-content: center; }
    .lbox { height: 139px; border: 1px solid #d0d0d0; flex: none; }
    .lhead { height: 24px; display: flex; align-items: center; justify-content: space-between; padding: 0 5px 0 8px; color: #2080c0; font-size: 14px; }
    .lmain { display: flex; gap: 2px; padding: 5px 0 0 8px; }
    .vt { width: 254px; height: 99px; border: 1px solid #d0d0d0; display: flex; flex: none; overflow: hidden; padding-left: 1px; }
    .vrows { width: 233px; flex: none; }
    .vr { height: 20px; display: grid; grid-template-columns: 61px 22px 53px 11px 13px 12px 61px; border-bottom: 1px solid #e2e2e2; }
    .vr > span { border-right: 1px solid #e2e2e2; padding: 1px 0 0 3px; line-height: 19px; white-space: nowrap; overflow: hidden; }
    .vr > span:nth-child(n+2) { padding-left: 3px; }
    .vr > span:nth-child(3) { letter-spacing: .7px; }
    .vr.sel-r { background: #3090f0; color: #fff; height: 18px; border-top: 1px dotted #222; border-bottom: 1px dotted #c08020; }
    .vr.sel-r > span { border-right-color: #e8f4ff; line-height: 16px; }
    .vsb { width: 18px; flex: none; display: flex; flex-direction: column; align-items: center; padding-top: 6px; }
    .vsb .th { width: 15px; height: 50px; background: #c0c0c0; margin-top: 5px; flex: none; }
    .vsb .dn { margin-top: 15px; }
    .arr { width: 9px; height: 6px; }
    .footer { display: flex; justify-content: flex-end; gap: 5px; padding: 8px 10px 0 0; }
    .btn { width: 54px; height: 25px; border: 1px solid #a0a0a0; background: #c0c0c0; display: flex; align-items: center; justify-content: center; flex: none; white-space: nowrap; }
    .btn.pri { background: #90c0e0; border-color: #40a0e0; }

    .tip { position: absolute; background: #f0f0f0; border: 1px solid #a8a8a8; }
    .tip1 { left: 855px; top: 337px; width: 78px; height: 27px; display: flex; align-items: center; padding-left: 16px; }
    .gripdots { position: absolute; left: 2px; top: 2px; bottom: 2px; width: 7px; background-image: radial-gradient(circle, #b0b0b0 1.100px, transparent 1.200px); background-size: 3.500px 3.500px; }
    .tip2 { left: 1172px; top: 467px; width: 194px; height: 55px; display: grid; grid-template-columns: 44px 67px 63px; grid-template-rows: 23px 25px; padding: 2px 0 0 16px; }
    .tip2 .lab1 { grid-column: 1 / span 2; padding-left: 2px; display: flex; align-items: center; }
    .tip2 .v1 { grid-column: 3; }
    .tip2 .sel { width: 62px; }
    .tip2 .m { width: 44px; height: 25px; border: 1px solid #a8a8a8; display: flex; align-items: center; justify-content: space-between; padding: 0 6px 0 2px; }
    .tip2 .n { padding-left: 4px; display: flex; align-items: center; white-space: nowrap; }
    .ime { position: absolute; left: 1172px; top: 624px; width: 190px; height: 34px; }
    .gauge { position: absolute; left: 1347px; top: 587px; width: 46px; height: 46px; border-radius: 50%; background: radial-gradient(circle at 50% 40%, #60c878, #30a858); border: 3px solid #d8d8d8; box-shadow: 0 0 0 1px #909090; color: #fff; font-weight: 700; font-size: 12px; display: flex; align-items: center; padding-left: 2px; }
    .cursor { position: absolute; left: 337px; top: 438px; width: 14px; height: 22px; }
  `;

  private row(items: Item[], end: number, cls = "") {
    return html`<div class="tbar ${cls}"><div class="bar" style="width:${end}px;padding-left:${items[0][0] - 10}px">
      ${items.map(([x, n], i) => {
        const w = (i < items.length - 1 ? items[i + 1][0] : end) - x;
        let c: any;
        if (n.startsWith("text:")) c = html`<span class="ttext">${n.slice(5)}</span>`;
        else if (n.startsWith("sel:") || n.startsWith("dsel:")) {
          const [k, t, sw] = n.split(":");
          c = html`<div class="tsel ${k === "dsel" ? "dis" : ""}" style="width:${sw}px"><span>${t}</span>${tri}</div>`;
        } else c = icon(n);
        return html`<div class="cell" style="width:${w}px">${c}</div>`;
      })}
    </div></div>`;
  }

  private scene() {
    const rects = (bands: [number, number, string][], cp = "") => bands.map(([y, h, c]) => svg`<rect x="244" y=${y} width="1122" height=${h} fill=${c} clip-path=${cp || "none"}/>`);
    return html`<svg class="scene" viewBox="244 191 1122 575">
      <defs>
        <clipPath id="topf"><path d="M557 212L850 191H1056L1098 400L600 435z"/></clipPath>
        <clipPath id="sidef"><path d="M556 214L600 435L606 503L1106 469L1112 766H588L563 646z"/></clipPath>
        <linearGradient id="low" gradientUnits="userSpaceOnUse" x1="605" y1="460" x2="608" y2="503">
          <stop offset="0" stop-color="#e4d610"/><stop offset=".55" stop-color="#e0d010"/><stop offset=".56" stop-color="#d8c810"/><stop offset=".75" stop-color="#d0c010"/><stop offset=".76" stop-color="#c0b010"/><stop offset="1" stop-color="#a89808"/>
        </linearGradient>
        <radialGradient id="ball" cx=".4" cy=".35" r=".7"><stop offset="0" stop-color="#d8c078"/><stop offset=".6" stop-color="#a88c48"/><stop offset="1" stop-color="#6e5820"/></radialGradient>
      </defs>
      ${rects(BANDS)}
      ${rects(TOPB, "url(#topf)")}
      ${rects(SIDEB, "url(#sidef)")}
      <path d="M557 212L850 191M1056 191L1098 400M556 214L600 435M606 503L612 766M563 646L588 766M1106 469L1112 766" fill="none" stroke="#909090" stroke-width="1"/>
      <path d="M555.500 191V463M555.500 527V766" stroke="#333" stroke-width="1"/>
      <path d="M556.500 225L558 460" stroke="#2040d0" stroke-width="1"/>
      <path d="M553 212L563 646" stroke="#f0c020" stroke-width="2.400"/>
      <path d="M600 435L1099 401L1104 426L605 460z" fill="#f0e010"/>
      <path d="M605 460L1104 426L1106 469L607 503z" fill="url(#low)"/>
      <path d="M600 435L1099 401" stroke="#444" stroke-width=".8"/>
      <path d="M605 460L1104 426" stroke="#60a080" stroke-width=".8"/>
      <path d="M607 503L1106 469" stroke="#3a3420" stroke-width="1"/>
      <path d="M587 495H1172" stroke="#304030" stroke-width="1"/>
      <path d="M1106 470L1172 492" stroke="#b0a060" stroke-width="1"/>
      <path d="M830 445L854 364" stroke="#b0a060" stroke-width="1"/>
      <path d="M1098 393L1104 426L1106 470" fill="none" stroke="#20a0e0" stroke-width="2"/>
      <path d="M553 206l6 6-6 6-6-6z" fill="none" stroke="#b09050"/>
      <path d="M558 425l4 4-4 4-4-4z" fill="none" stroke="#b08050"/>
      <path d="M559.500 488l6 6-6 6-6-6z" fill="#2040d0" stroke="#f04010" stroke-width="1.600"/>
      <path d="M563 641l5 5-5 5-5-5z" fill="#f0ece0" stroke="#a09070"/>
      ${HANDLES.map(([a, b, c, d, e, f]) => svg`<path d="M${a} ${b}L${c} ${d}L${e} ${f}" fill="none" stroke="#706030" stroke-width="2"/>`)}
      ${HANDLES.map(([a, b, c, d, e, f]) => svg`${coneUp(a - 1, b - 9)}${sphere(a, b)}${sphere(c, d)}${coneDown(e, f, f + 15)}`)}
      ${sphere(830, 445)}
      <path d="M1098 393l4 8h-8z" fill="#20a0e0"/>
      <circle cx="1099" cy="400" r="4.500" fill="#0868c0"/>
      ${sphere(1104, 426)}
      <path d="M1101 471h9l-4.500 13z" fill="#204898"/>
      <ellipse cx="1106" cy="470" rx="4.500" ry="2.500" fill="#20a8e8"/>
      <text x="1112" y="744" text-anchor="middle" font-size="12" fill="#3048d0" font-family="Liberation Sans">Z</text>
      <path d="M1112 747l3.500 14h-7z" fill="#000090"/><path d="M1112 760v6" stroke="#6878e0"/>
    </svg>`;
  }

  private dialog() {
    return html`<div class="dialog">
      <div class="dhead"><svg class="gg" width="18" height="18" viewBox="0 0 20 20"><circle cx="10" cy="10" r="5" fill="none" stroke="#fff" stroke-width="2.500"/><path d="M10 2v3M10 15v3M2 10h3M15 10h3M4.300 4.300l2 2M13.700 13.700l2 2M15.700 4.300l-2 2M6.300 13.700l-2 2" stroke="#fff" stroke-width="2.500"/></svg><span>边倒圆</span><span class="sp"></span>
        <svg width="16" height="16" viewBox="0 0 16 16"><path d="M12 4a5.500 5.500 0 1 1-6-1" fill="none" stroke="#fff" stroke-width="1.800"/><path d="M4 1l4 2-3 3z" fill="#fff"/></svg>
        <svg width="16" height="16" viewBox="0 0 16 16" style="margin-left:5px"><path d="M3 3l10 10M13 3L3 13" stroke="#fff" stroke-width="2"/></svg>
      </div>
      <div class="dbody">
        <section class="sec">
          <div class="shead"><span>要倒圆的边</span>${chevUp}</div>
          <div class="sbody">
            <div class="frow h26"><span>混合面连续性</span>${select(dIcon(arcIcon("#3a90c8", svg`<circle cx="4" cy="14" r="1.600" fill="none" stroke="#7030a0"/>`)), "G1（相切）")}</div>
            <div class="frow h32"><span class="lchk">${checkMark}选择边 (1)</span>
              <div class="ibtn ib32"><svg width="24" height="24" viewBox="0 0 24 24"><path d="M12 2l9 4v12l-9 4-9-4V6z" fill="#d8d8d8" stroke="#222" stroke-width="1.200"/><path d="M12 10v12l9-4V6z" fill="#909090"/><path d="M3 6l9 4 9-4-9-4z" fill="#f8f8f8" stroke="#222" stroke-width=".8"/><path d="M3 6l9 4" stroke="#e03010" stroke-width="2"/><path d="M3 6v6" stroke="#e03010" stroke-width="1.400"/></svg></div></div>
            <div class="frow h26"><span>形状</span>${select(dIcon(arcIcon("#3a90c8", svg`<text x="0" y="14" font-size="7" font-weight="700" fill="#222">R</text>${st("M7 15L3 9", "#222", 1)}`)), "圆形")}</div>
            <div class="frow h25"><span>半径 1</span><div class="sel"><span class="sel-t">10</span><span class="unit">mm</span>${tri}</div></div>
            <div class="frow h24"><span class="dim">添加新集</span><div class="ibtn ib24 ibd"><svg width="18" height="18" viewBox="0 0 18 18">${st("M11 5v12M5 11h12", "#b0b0b0", 1)}<circle cx="11" cy="11" r="2" fill="#c8b0a8"/>${st("M4 1v6M1 4h6", "#a0b0c0", 1.400)}</svg></div></div>
            <div class="sub"><span>列表</span>${chevDown}</div>
          </div>
        </section>
        <section class="sec">
          <div class="shead"><span>可变半径点</span>${chevUp}</div>
          <div class="sbody">
            <div class="yrow"><div class="ybar">指定新的位置</div>
              <div class="ibtn yb1"><svg width="20" height="20" viewBox="0 0 20 20">${st("M13 2v10M8 7h10", "#222", 1.200)}${st("M2 10c0 4 2 5 5 5", "#e05010", 1.400)}<path d="M6 12l4 3-4 3z" fill="#e05010"/><path d="M11 17h2v2h-2zM14 17h2v2h-2zM17 17h2v2h-2z" fill="#222"/></svg></div>
              <div class="yb2"><span class="a"><svg width="24" height="24" viewBox="0 0 20 20"><path d="M12 2L7 8l3 1-4 7 8-8-3-1 4-5z" fill="#f0d860" stroke="#605020" stroke-width=".7"/><circle cx="14" cy="17" r="1.700" fill="#d03010"/></svg></span><span class="b"><svg width="7" height="4" viewBox="0 0 7 4"><path d="M0 0h7L3.500 4z" fill="#2070b0"/></svg></span></div>
            </div>
            <div class="frow h23"><span>V 半径 15</span><div class="sel"><span class="sel-t">10</span><span class="unit">mm</span>${tri}</div></div>
            <div class="frow h26"><span>位置</span>${select(dIcon(pctIcon), "弧长百分比")}</div>
            <div class="frow h25"><span>弧长百分比</span><div class="sel"><span>0</span>${tri}</div></div>
            <div class="lbox">
              <div class="lhead"><span>列表</span>${chevUp}</div>
              <div class="lmain">
                <div class="vt">
                  <div class="vrows">${VROWS.map((r, i) => html`<div class="vr ${i === 4 ? "sel-r" : ""}"><span>${r[0]}</span><span>${r[1]}</span><span>${r[2]}</span><span></span><span></span><span></span><span></span></div>`)}</div>
                  <div class="vsb"><svg class="arr" viewBox="0 0 9 6"><path d="M1 5l3.500-4L8 5" fill="none" stroke="#333" stroke-width="1.400"/></svg><div class="th"></div><svg class="arr dn" viewBox="0 0 9 6"><path d="M1 1l3.500 4L8 1" fill="none" stroke="#333" stroke-width="1.400"/></svg></div>
                </div>
                <div class="ibtn ib24"><svg width="16" height="16" viewBox="0 0 16 16"><path d="M2 2l12 12M14 2L2 14" stroke="#111" stroke-width="2.600"/></svg></div>
              </div>
            </div>
          </div>
        </section>
        ${["拐角倒角", "拐角突然停止", "修剪", "溢出解", "设置", "预览"].map((t) => html`<section class="sec"><div class="shead"><span>${t}</span>${chevDown}</div></section>`)}
        <div class="footer"><div class="btn">&lt; 确定 &gt;</div><div class="btn pri">应用</div><div class="btn">取消</div></div>
      </div>
    </div>`;
  }

  render() {
    return html`
      <div class="title"><div class="logo">NX</div><div class="doc">NX 10 - 建模 - [_model1.pr</div><div class="siemens">SIEMENS</div>${winCtl}</div>
      <div class="menu">
        <svg class="mbadge" viewBox="0 0 16 16"><path d="M2 2l6-1v10l6 1v3H2z" fill="#2060c0"/><path d="M8 8l6 2v3l-6-2z" fill="#60a0e0"/></svg>
        ${MENU.map(([x, t, k], i) => {
          const next = i < MENU.length - 1 ? MENU[i + 1][0] : x + 100;
          return html`<span class="mi" style="width:${next - x}px">${t}${k ? html`(<u>${k}</u>)` : ""}</span>`;
        })}
        ${winCtl}
      </div>
      ${this.row(ROW1, 1337, "r1")}
      ${this.row(ROW2, 1366)}
      ${this.row(ROW3, 1155)}
      ${this.row(ROW4, 1366, "r4")}
      <div class="cue"><span class="cue-l">为指定半径选择点，或按 MB2 结束</span><span class="cue-m">曲线上的点 - 边 / 块(9)</span>
        <svg class="cue-ico" viewBox="0 0 20 20"><path d="M2 2h16v16H2z" fill="#c8c8c8"/><path d="M5 6l9-3v8l-9 3zM5 14v4" fill="#e8e8e8" stroke="#909090"/></svg>
        <svg class="cue-ico" viewBox="0 0 20 20"><path d="M1 5V1h4M15 1h4v4M19 15v4h-4M5 19H1v-4" fill="none" stroke="#909090"/><path d="M6 3h8v14H6z" fill="#4080a8" stroke="#304050"/><path d="M7 7h6v7H7z" fill="#d0e0f0"/></svg>
      </div>
      <div class="main">
        <div class="rail">${RAIL.map(([y, n], i) => {
          const h = (i < RAIL.length - 1 ? RAIL[i + 1][0] : y + 40) - y;
          return html`<div class="rc ${n === "rHist" ? "act" : ""} ${n === "gear" ? "g" : ""}" style="height:${h}px">${icon(n)}</div>`;
        })}</div>
        <div class="nav">
          <div class="nav-h">部件导航器</div>
          <div class="frame">
            <div class="thead"><div class="tcol"><span>名称</span><svg width="9" height="5" viewBox="0 0 9 5"><path d="M0 5h9L4.500 0z" fill="#111"/></svg></div><div class="tname">最</div></div>
            ${TREE.map((n) => html`<div class="trow"><div class="tcol"><div class="node ${n.depth ? "d1" : ""}">
              ${n.depth ? html`<span class="cb">${checkMark}</span>` : n.box ? html`<span class="bx">${n.box}</span>` : html`<span class="nobx"></span>`}
              ${n.check ? checkMark : ""}
              <svg class="ico" viewBox="0 0 20 20">${n.ico}</svg>
              <span class="t ${n.bold ? "bold" : ""}">${n.label}</span>
            </div></div><div class="tname">${n.mark ? checkMark : ""}</div></div>`)}
            ${Array.from({ length: 15 }, () => html`<div class="trow"><div class="tcol"></div></div>`)}
            <svg class="tlines" viewBox="0 0 244 768"><path d="M41.500 251V306M42 251H52M60.500 321V351M61 331H72M61 351H72" fill="none" stroke="#999" stroke-dasharray="1 1"/></svg>
            <div class="tsb"><svg width="6" height="10" viewBox="0 0 6 10"><path d="M5 1L1 5l4 4" fill="none" stroke="#333" stroke-width="1.600"/></svg><div class="thumb"></div></div>
          </div>
          <div class="nsec"><span>相依性</span></div>
          <div class="nsec"><span>细节</span></div>
          <div class="nsec"><span>预览</span>${chevDown}</div>
        </div>
        <div class="canvas">${this.scene()}</div>
      </div>
      <div class="strip"></div>

      ${this.dialog()}

      <div class="tip tip1">${grip}半径 1=10</div>
      <div class="tip tip2">${grip}
        <div class="lab1">V 半径 15</div>
        <div class="v1"><div class="sel"><span>10</span>${tri}</div></div>
        <div class="m"><svg width="18" height="18" viewBox="0 0 16 16">${pctIcon}</svg>${tri}</div>
        <div class="n">弧长百分比</div>
        <div class="v1"><div class="sel"><span>0</span>${tri}</div></div>
      </div>

      <div class="gauge">73</div>
      <svg class="ime" viewBox="0 0 190 34">
        <rect x="25.500" y="6.500" width="160" height="23" fill="#f0f2f6" stroke="#b0c4de"/>
        <g transform="rotate(-9 15 16)"><rect x="3" y="5" width="25" height="23" rx="3" fill="#f0501c"/><text x="15.500" y="25" text-anchor="middle" font-size="23" font-weight="700" fill="#fff" font-family="Liberation Sans">S</text></g>
        <text x="42" y="24" text-anchor="middle" font-size="18" fill="#2070c0" font-family="Liberation Sans">A</text>
        <path d="M68 9c2 6-1 11-8 10 3 5 13 2 13-4 0-3-2-5-5-6z" fill="#2070c0"/>
        <circle cx="84" cy="13" r="2" fill="#2070c0"/><path d="M92 12c0 3 0 5-2 7" fill="none" stroke="#2070c0" stroke-width="2"/>
        <rect x="100" y="10" width="16" height="12" rx="1.500" fill="#2070c0"/><path d="M102 13h12M102 16h12M105 19h6" stroke="#fff" stroke-dasharray="1.500 1" stroke-width="1.500"/>
        <circle cx="131" cy="11" r="3.500" fill="#a8bcd4"/><path d="M125 23c0-6 3-8 6-8s6 2 6 8z" fill="#a8bcd4"/><rect x="135" y="18" width="5" height="6" fill="#f0f2f6" stroke="#a8bcd4"/>
        <path d="M145 11l5-3h4l5 3-2 4-2-1v9h-8v-9l-2 1z" fill="#2070c0"/>
        <path d="M166 24l8-8c-1-3 1-7 5-7l-2 4 2 2 4-2c0 4-3 6-7 5l-8 8z" fill="#2070c0"/>
        <circle cx="182" cy="7" r="4" fill="#f04010"/>
      </svg>
      <svg class="cursor" viewBox="0 0 14 22"><path d="M.5.5v17l4-4 3 7 3-1-3-7h5.500z" fill="#fff" stroke="#111"/></svg>
    `;
  }
}
